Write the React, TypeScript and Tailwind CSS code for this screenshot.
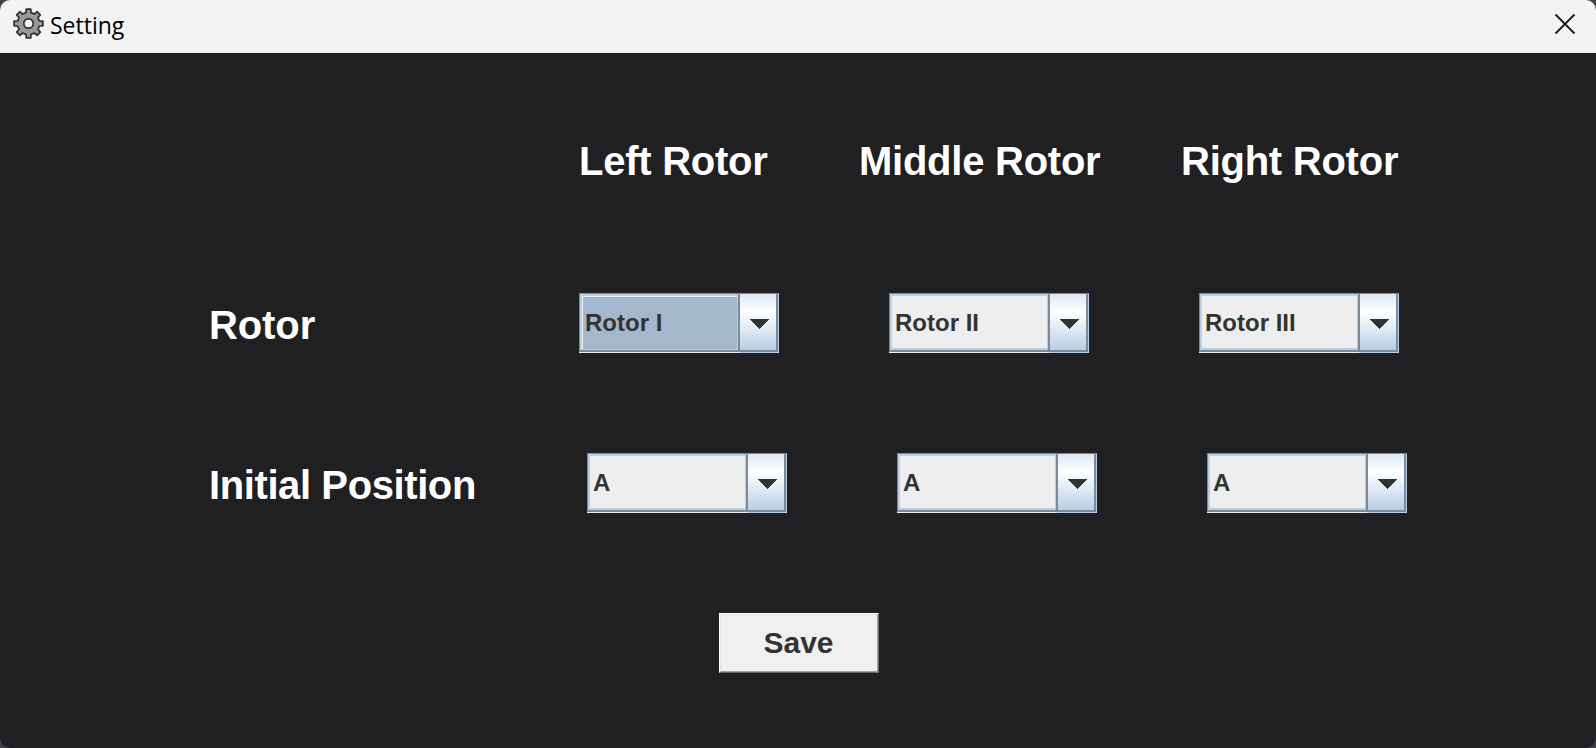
import React from "react";

function GearIcon() {
  const cx = 15.5;
  const cy = 15.5;
  const polar = (r: number, deg: number) => {
    const a = (deg * Math.PI) / 180;
    return `${(cx + r * Math.cos(a)).toFixed(2)} ${(cy + r * Math.sin(a)).toFixed(2)}`;
  };
  const points: string[] = [];
  for (let i = 0; i < 8; i++) {
    const c = i * 45;
    points.push(polar(11.2, c - 13), polar(14.6, c - 9), polar(14.6, c + 9), polar(11.2, c + 13));
  }
  return (
    <svg width="31" height="31" viewBox="0 0 31 31" className="block shrink-0">
      <path
        d={`M${points.join("L")}Z`}
        fill="#999999"
        stroke="#303030"
        strokeWidth="1.7"
        strokeLinejoin="round"
      />
      <circle cx="15.5" cy="15.5" r="4.7" fill="#f3f3f3" stroke="#303030" strokeWidth="1.7" />
    </svg>
  );
}

function ComboBox({ value, focused = false }: { value: string; focused?: boolean }) {
  return (
    <button
      type="button"
      className="flex h-[60px] w-[200px] flex-col bg-[#7a8a99] pt-px text-left text-[#333333]"
    >
      <span className="flex h-[58px] w-full border-r border-[#b8cfe5] pl-px">
        <span className="flex h-14 w-[158px] border-2 border-r-1 border-[#b8cfe5]">
          <span
            className={
              focused
                ? "flex h-[53px] flex-1 items-center border-t border-l border-[#eeeeee] bg-[#a3b8cc] pl-[2px]"
                : "flex flex-1 items-center bg-[#eeeeee] pt-[2px] pl-[3px]"
            }
          >
            <span className="text-[24px] leading-[28px] font-bold">{value}</span>
          </span>
        </span>
        <span className="ml-[2px] flex h-14 w-9 bg-linear-to-b from-[#dde8f3] via-white via-32% to-[#b8cfe5] pt-[25px] pl-[9px]">
          <svg width="20" height="10" viewBox="0 0 20 10" className="block" shapeRendering="crispEdges">
            <path d="M0 0H20L10 10Z" fill="#333333" />
          </svg>
        </span>
      </span>
      <span className="flex h-px w-full bg-[#eeeeee]">
        <span className="ml-auto h-px w-10 bg-[#b8cfe5]" />
      </span>
    </button>
  );
}

export default function App() {
  return (
    <div className="h-[748px] w-[1596px] overflow-hidden bg-[#404448] font-['Liberation_Sans',Arial,sans-serif]">
      <div className="flex h-full w-full flex-col overflow-hidden rounded-[10px] bg-[#202022]">
        <header className="flex h-[53px] shrink-0 justify-between bg-[#f3f3f3]">
          <div className="flex pt-2 pl-[13px]">
            <GearIcon />
            <span className="ml-[6px] font-['Open_Sans','Noto_Sans',sans-serif] text-[23px] leading-[34px] text-black">
              Setting
            </span>
          </div>
          <svg width="22" height="22" viewBox="0 0 22 22" className="mt-[13px] mr-5 block">
            <path d="M1.5 1.5L20.5 20.5M20.5 1.5L1.5 20.5" stroke="#1a1a1a" strokeWidth="1.9" fill="none" />
          </svg>
        </header>

        <main className="flex flex-col pt-[78px] text-white">
          <div className="flex h-[60px] items-center pl-[579px] text-[40px] leading-[46px] font-bold tracking-[-0.25px]">
            <span className="w-[280px] whitespace-nowrap">Left Rotor</span>
            <span className="w-[322px] whitespace-nowrap">Middle Rotor</span>
            <span className="whitespace-nowrap">Right Rotor</span>
          </div>

          <div className="mt-[102px] flex h-[60px] pl-[209px]">
            <span className="w-[370px] pt-[9px] text-[40px] leading-[46px] font-bold tracking-[-0.1px]">
              Rotor
            </span>
            <div className="flex gap-[110px]">
              <ComboBox value="Rotor I" focused />
              <ComboBox value="Rotor II" />
              <ComboBox value="Rotor III" />
            </div>
          </div>

          <div className="mt-[100px] flex h-[60px] pl-[209px]">
            <span className="w-[378px] pt-[9px] text-[40px] leading-[46px] font-bold tracking-[-0.4px]">
              Initial Position
            </span>
            <div className="flex gap-[110px]">
              <ComboBox value="A" />
              <ComboBox value="A" />
              <ComboBox value="A" />
            </div>
          </div>

          <div className="mt-[100px] flex pl-[719px]">
            <button
              type="button"
              className="h-[60px] w-[160px] border border-t-white border-r-[#696969] border-b-[#696969] border-l-white"
            >
              <span className="flex h-full w-full items-center justify-center border border-t-[#e3e3e3] border-r-[#a0a0a0] border-b-[#a0a0a0] border-l-[#e3e3e3] bg-[#f0f0f0] pr-px text-[30px] leading-[34px] font-bold text-[#333333]">
                Save
              </span>
            </button>
          </div>
        </main>
      </div>
    </div>
  );
}
